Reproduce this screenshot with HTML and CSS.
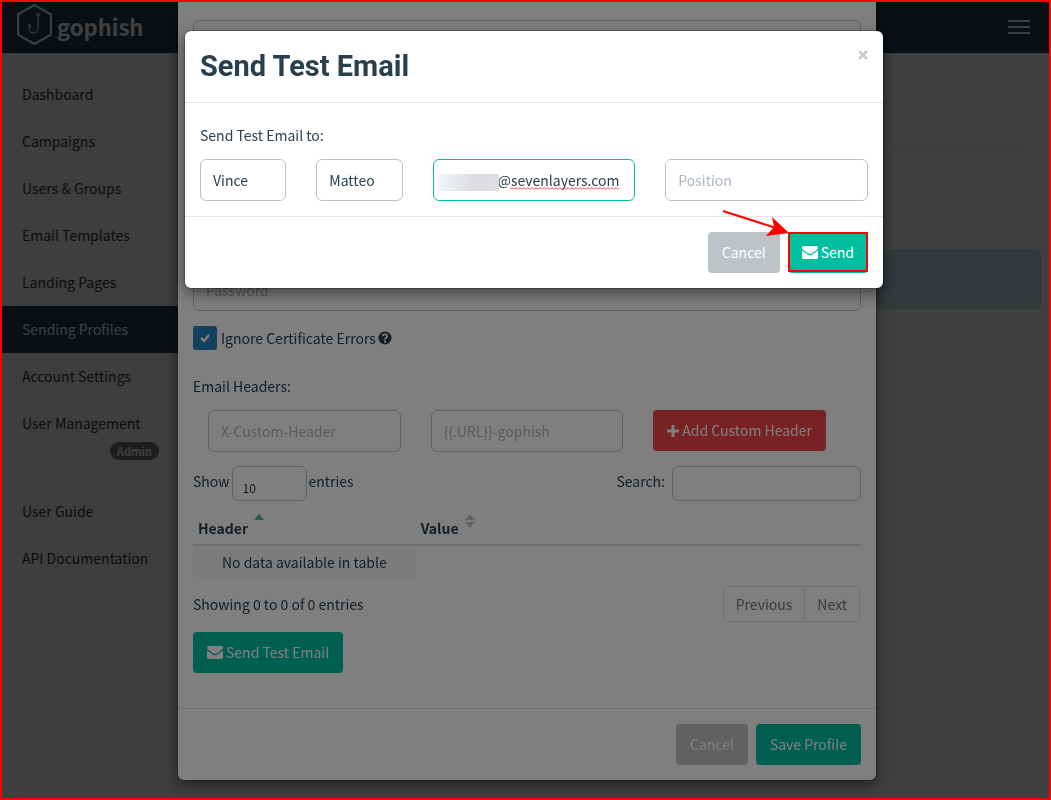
FILE: index.html
```
<!DOCTYPE html>
<html lang="en">
<head>
  <meta charset="utf-8">
  <title>Sending Profiles - Gophish</title>
  <meta name="viewport" content="width=device-width, initial-scale=1">
  <link rel="stylesheet" href="styles.css">
</head>
<body>
  <header class="navbar">
    <a class="brand" href="#">
      <svg class="logo" viewBox="0 0 36 42" fill="none" stroke="#fff">
        <path d="M18 2 L34 11 V31 L18 40 L2 31 V11 Z" stroke-width="2"/>
        <circle cx="21.500" cy="11.500" r="1.500"/>
        <path d="M21.500 13 V24 C21.500 31 12.500 31 12.500 24 V21 L15 24"/>
      </svg>
      <span>gophish</span>
    </a>
    <button class="menu-toggle" type="button" aria-label="Menu"><i></i><i></i><i></i></button>
  </header>

  <div class="page">
    <nav class="sidebar">
      <a href="#">Dashboard</a>
      <a href="#">Campaigns</a>
      <a href="#">Users &amp; Groups</a>
      <a href="#">Email Templates</a>
      <a href="#">Landing Pages</a>
      <a href="#" class="active">Sending Profiles</a>
      <a href="#">Account Settings</a>
      <a href="#" class="with-badge">User Management <span class="badge">Admin</span></a>
      <div class="nav-divider"></div>
      <a href="#">User Guide</a>
      <a href="#">API Documentation</a>
    </nav>
    <main class="content">
      <hr>
      <div class="alert"></div>
    </main>
  </div>

  <!-- Sending profile modal -->
  <div class="overlay profile-overlay">
    <div class="modal profile-modal">
      <form class="profile-body">
        <input class="form-control" type="text" aria-label="Username">
        <input class="form-control password" type="text" placeholder="Password" aria-label="Password">
        <div class="check-row">
          <span class="check">
            <input type="checkbox" id="ignoreCert" checked>
            <svg viewBox="0 0 12 12"><path d="M2 6 L5 9 L10 3" fill="none" stroke="#fff" stroke-width="2.400"/></svg>
          </span>
          <label for="ignoreCert">Ignore Certificate Errors</label>
          <svg class="help" viewBox="0 0 14 14">
            <circle cx="7" cy="7" r="6.500" fill="#283f50"/>
            <path d="M4.800 5.300 C5 2.700 9.300 2.900 9.200 5.300 C9.200 6.800 7 6.700 7 8.600" fill="none" stroke="#fff" stroke-width="1.800"/>
            <rect x="6" y="9.600" width="2" height="2" fill="#fff"/>
          </svg>
        </div>
        <p class="field-title">Email Headers:</p>
        <div class="header-row">
          <div><input class="form-control" type="text" placeholder="X-Custom-Header" aria-label="Header name"></div>
          <div><input class="form-control" type="text" placeholder="{{.URL}}-gophish" aria-label="Header value"></div>
          <div>
            <button class="btn btn-danger" type="button">
              <svg class="icon-plus" viewBox="0 0 12 12"><path d="M4.500 0h3v4.500H12v3H7.500V12h-3V7.500H0v-3h4.500z"/></svg>
              Add Custom Header
            </button>
          </div>
        </div>
        <div class="table-tools">
          <label class="length">Show
            <select><option>10</option><option>25</option></select>
            entries
          </label>
          <label class="search">Search: <input class="form-control" type="search"></label>
        </div>
        <table>
          <thead>
            <tr>
              <th>Header <svg class="sort" viewBox="0 0 10 14"><path d="M0 6 L5 0 L10 6z" fill="#46be8a"/></svg></th>
              <th>Value <svg class="sort" viewBox="0 0 10 14"><path d="M0 6 L5 0 L10 6z M0 8 L5 14 L10 8z" fill="#bec3c7"/></svg></th>
              <th></th>
            </tr>
          </thead>
          <tbody>
            <tr><td>No data available in table</td></tr>
          </tbody>
        </table>
        <div class="table-foot">
          <span>Showing 0 to 0 of 0 entries</span>
          <div class="pager"><a href="#">Previous</a><a href="#">Next</a></div>
        </div>
        <button class="btn btn-primary" type="button">
          <svg class="icon-mail" viewBox="0 0 16 13"><path d="M0 1.500Q0 0 1.500 0h13Q16 0 16 1.500Q16 3 14 4.500L9.500 7.600Q8 8.500 6.500 7.600L2 4.500Q0 3 0 1.500z M0 4.500L6 8.700Q8 10 10 8.700L16 4.500V11.500Q16 13 14.500 13h-13Q0 13 0 11.500z"/></svg>
          Send Test Email
        </button>
      </form>
      <div class="modal-footer">
        <button class="btn btn-default" type="button">Cancel</button>
        <button class="btn btn-primary" type="button">Save Profile</button>
      </div>
    </div>
  </div>

  <!-- Test email modal -->
  <div class="overlay test-overlay">
    <div class="modal">
      <div class="modal-header">
        <h2>Send Test Email</h2>
        <button class="close" type="button" aria-label="Close">
          <svg viewBox="0 0 10 10"><path d="M1 1 L9 9 M9 1 L1 9" stroke="#ccc" stroke-width="2.500"/></svg>
        </button>
      </div>
      <form class="test-body">
        <p>Send Test Email to:</p>
        <div class="test-row">
          <div><input class="form-control" type="text" value="Vince" aria-label="First name"></div>
          <div><input class="form-control" type="text" value="Matteo" aria-label="Last name"></div>
          <div class="email">
            <input class="form-control" type="text" value="@sevenlayers.com" aria-label="Email">
            <span class="smudge"></span>
            <svg class="squiggle">
              <defs><pattern id="wave" width="4" height="3" patternUnits="userSpaceOnUse"><path d="M0 2.500 L2 0.500 L4 2.500" fill="none" stroke="#f23645"/></pattern></defs>
              <rect width="100%" height="3" fill="url(#wave)"/>
            </svg>
          </div>
          <div><input class="form-control" type="text" placeholder="Position" aria-label="Position"></div>
        </div>
      </form>
      <div class="modal-footer">
        <button class="btn btn-default" type="button">Cancel</button>
        <div class="send-wrap">
          <button class="btn btn-primary" type="button">
            <svg class="icon-mail" viewBox="0 0 16 13"><path d="M0 1.500Q0 0 1.500 0h13Q16 0 16 1.500Q16 3 14 4.500L9.500 7.600Q8 8.500 6.500 7.600L2 4.500Q0 3 0 1.500z M0 4.500L6 8.700Q8 10 10 8.700L16 4.500V11.500Q16 13 14.500 13h-13Q0 13 0 11.500z"/></svg>
            Send
          </button>
          <span class="callout"></span>
          <svg class="arrow" viewBox="0 0 68 26">
            <path d="M1 1 L54 18" stroke="#f00" stroke-width="2"/>
            <path d="M67 23 L50 7 L52 17 L44 26 Z" fill="#f00"/>
          </svg>
        </div>
      </div>
    </div>
  </div>

  <div class="frame"></div>
</body>
</html>
```
FILE: styles.css
```
*, *::before, *::after {
  box-sizing: border-box;
  margin: 0;
  padding: 0;
}

html, body {
  height: 100%;
  overflow: hidden;
}

body {
  display: flex;
  flex-direction: column;
  padding: 2px;
  font-family: "Noto Sans CJK SC", sans-serif;
  font-size: 14px;
  line-height: 21px;
  color: #283f50;
  background: #fff;
}

input, select, button {
  font: inherit;
  color: inherit;
}

a {
  color: inherit;
  text-decoration: none;
}

svg {
  display: block;
  flex: none;
}

/* page behind the modals */
.navbar {
  display: flex;
  justify-content: space-between;
  align-items: center;
  height: 51px;
  padding: 0 19px 2px 14px;
  background: #283f50;
}

.brand {
  display: flex;
  align-items: center;
  gap: 4px;
  font-size: 22px;
  font-weight: bold;
  color: #fff;
}

.logo {
  width: 37px;
  height: 43px;
  margin-bottom: 4px;
}

.menu-toggle {
  display: flex;
  flex-direction: column;
  gap: 4px;
  width: 22px;
  background: none;
  border: none;
}

.menu-toggle i {
  height: 2px;
  background: #fff;
}

.page {
  display: flex;
  flex: 1;
}

.sidebar {
  width: 177px;
  padding-top: 18px;
  color: #333;
  background: #f9f9f9;
  border-right: 1px solid #eee;
}

.sidebar a {
  display: block;
  padding: 13px 20px;
}

.sidebar .active {
  color: #fff;
  background: #283f50;
}

.sidebar .with-badge {
  display: flex;
  flex-direction: column;
  padding-bottom: 7px;
}

.badge {
  align-self: flex-end;
  margin: 8px -1px 0 0;
  padding: 0 7px;
  font-size: 11px;
  font-weight: bold;
  line-height: 18px;
  color: #fff;
  background: #777;
  border-radius: 9px;
}

.nav-divider {
  margin-bottom: 20px;
  border-top: 1px solid #eee;
}

.content {
  flex: 1;
  padding: 98px 8px 0 40px;
}

hr {
  margin-right: 16px;
  border: none;
  border-top: 1px solid #eee;
}

.alert {
  height: 59px;
  margin-top: 98px;
  background: #d3e6ee;
  border: 1px solid #bce0e4;
  border-radius: 4px;
}

/* modals */
.overlay {
  position: fixed;
  inset: 0;
  display: flex;
  justify-content: center;
  align-items: flex-start;
  overflow: hidden;
  background: rgba(0, 0, 0, 0.5);
}

.profile-overlay {
  padding-left: 3px;
}

.test-overlay {
  padding: 31px 0 0 17px;
}

.modal {
  width: 100%;
  max-width: 698px;
  background: #fff;
  border-radius: 6px;
  box-shadow: 0 5px 15px rgba(0, 0, 0, 0.5), 0 0 0 1px rgba(0, 0, 0, 0.2);
}

.profile-modal {
  border-radius: 0 0 6px 6px;
}

.form-control {
  display: block;
  width: 100%;
  height: 42px;
  padding: 0 12px;
  background: #fff;
  border: 1px solid #bec3c7;
  border-radius: 6px;
  outline: none;
}

.form-control::placeholder {
  color: #acb6c0;
  opacity: 1;
}

.btn {
  display: inline-flex;
  align-items: center;
  gap: 3px;
  padding: 10px 14px;
  line-height: 21px;
  color: #fff;
  border: none;
  border-radius: 4px;
  white-space: nowrap;
}

.btn-primary {
  background: #00bfa0;
}

.btn-default {
  background: #bec3c7;
}

.btn-danger {
  background: #f04447;
}

.icon-mail {
  width: 16px;
  height: 13px;
  fill: #fff;
}

.icon-plus {
  width: 12px;
  height: 12px;
  fill: #fff;
}

.profile-body {
  padding: 20px 15px 35px;
}

.password {
  margin-top: 207px;
}

.check-row {
  display: flex;
  align-items: center;
  gap: 2px;
  margin-top: 15px;
}

.check {
  display: grid;
  place-items: center;
  margin-right: 2px;
}

.check input, .check svg {
  grid-area: 1 / 1;
}

.check input {
  width: 24px;
  height: 24px;
  appearance: none;
  background: #2780b8;
  border-radius: 3px;
}

.check svg {
  width: 12px;
  height: 12px;
  pointer-events: none;
}

.help {
  width: 14px;
  height: 14px;
}

.field-title {
  margin: 26px 0 13px;
}

.header-row {
  display: grid;
  grid-template-columns: repeat(3, 1fr);
}

.header-row > div, .test-row > div {
  padding: 0 15px;
}

.table-tools {
  display: flex;
  justify-content: space-between;
  margin-top: 14px;
}

.length, .search {
  display: flex;
  gap: 2px;
  line-height: 31px;
}

.search {
  gap: 7px;
}

.length select {
  width: 75px;
  height: 35px;
  padding: 8px 10px 0;
  font-size: 12px;
  line-height: 20px;
  appearance: none;
  background: none;
  border: 1px solid #bec3c7;
  border-radius: 6px;
}

.search .form-control {
  width: 189px;
  height: 35px;
}

table {
  width: 100%;
  margin-top: 11px;
  table-layout: fixed;
  border-collapse: collapse;
}

th {
  height: 33px;
  padding: 5px;
  text-align: left;
  border-bottom: 2px solid #ddd;
}

th .sort {
  display: inline-block;
  width: 10px;
  height: 14px;
  margin: -10px 0 0 3px;
  vertical-align: 6px;
}

td {
  height: 33px;
  padding: 5px;
  text-align: center;
  background: #f9f9f9;
}

.table-foot {
  display: flex;
  justify-content: space-between;
  align-items: center;
  margin: 8px 1px 10px 0;
}

.pager {
  display: flex;
  color: #777;
  border: 1px solid #ddd;
  border-radius: 4px;
}

.pager a {
  padding: 7px 12px 6px;
}

.pager a + a {
  border-left: 1px solid #ddd;
}

.modal-footer {
  display: flex;
  justify-content: flex-end;
  gap: 8px;
  padding: 15px;
  border-top: 1px solid #e5e5e5;
}

.modal-header {
  display: flex;
  justify-content: space-between;
  align-items: flex-start;
  height: 72px;
  padding: 18px 15px 16px;
  border-bottom: 1px solid #e5e5e5;
}

h2 {
  font-family: Roboto, sans-serif;
  font-size: 29px;
  font-weight: bold;
  line-height: 35px;
}

.close {
  margin-top: 1px;
  background: none;
  border: none;
}

.close svg {
  width: 10px;
  height: 10px;
}

.test-body {
  padding: 22px 0 15px;
}

.test-body p {
  padding: 0 15px 13px;
}

.test-row {
  display: grid;
  grid-template-columns: 1fr 1fr 2fr 2fr;
}

.email {
  position: relative;
}

.email .form-control {
  padding-left: 64px;
  border-color: #00bfa0;
}

.smudge {
  position: absolute;
  left: 20px;
  top: 15px;
  width: 61px;
  height: 17px;
  background: linear-gradient(90deg, #f0f7f6, #dddbe0 60%, #dfdfe2);
}

.squiggle {
  position: absolute;
  left: 92px;
  top: 28px;
  width: 109px;
  height: 3px;
}

.send-wrap {
  position: relative;
}

/* highlight and pointer drawn over the Send button */
.callout {
  position: absolute;
  inset: 0 0 1px;
  border: 2px solid #f00;
}

.arrow {
  position: absolute;
  right: 78px;
  bottom: 37px;
  width: 68px;
  height: 26px;
}

.frame {
  position: fixed;
  inset: 0;
  border: 2px solid #f00;
  pointer-events: none;
}
```
